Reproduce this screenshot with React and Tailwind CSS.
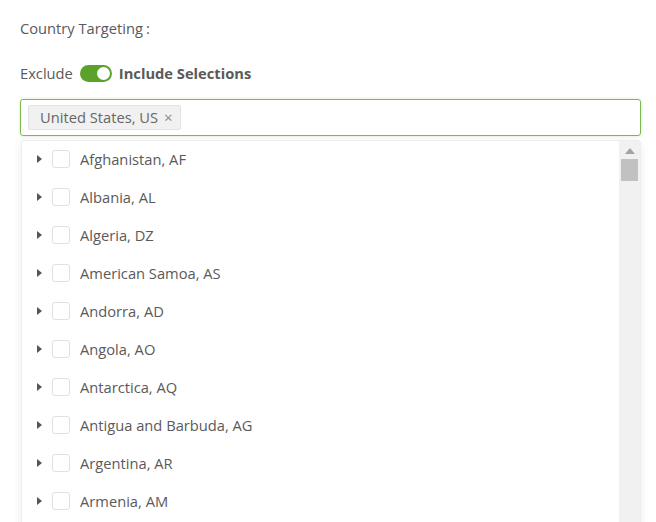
import React from "react";

const countries = [
  "Afghanistan, AF",
  "Albania, AL",
  "Algeria, DZ",
  "American Samoa, AS",
  "Andorra, AD",
  "Angola, AO",
  "Antarctica, AQ",
  "Antigua and Barbuda, AG",
  "Argentina, AR",
  "Armenia, AM",
];

const App = () => {
  return (
    <div
      className="h-[522px] w-[656px] overflow-hidden bg-white pl-5 pr-[15px] pt-[17px] text-[14.7px] text-[#5a5a5a]"
      style={{ fontFamily: "'Open Sans', sans-serif" }}
    >
      {/* TITLE */}
      <div className="leading-[22px]">
        Country Targeting<span className="ml-[3px]">:</span>
      </div>

      {/* TOGGLE ROW */}
      <div className="mt-[23px] flex items-center h-[22px]">
        <span>Exclude</span>
        <span className="ml-[7px] flex h-[17px] w-[32px] items-center justify-end rounded-full bg-[#5ba22b] pr-[2px]">
          <span className="h-[13px] w-[13px] rounded-full bg-white" />
        </span>
        <span className="ml-[7px] font-bold">Include Selections</span>
      </div>

      {/* INPUT */}
      <div className="mt-[15px] flex h-[37px] items-center rounded-[3px] border border-[#7cbb4f] px-[7px] shadow-[0_0_3px_rgba(124,187,79,0.35)]">
        <span className="flex h-[25px] items-center rounded-[2px] border border-[#e3e3e3] bg-[#f1f1f1] pl-[11px] pr-[7px] text-[#666]">
          United States, US
          <span className="ml-[6px] text-[15px] leading-none text-[#888]">×</span>
        </span>
      </div>

      {/* DROPDOWN */}
      <div className="mt-[4px] ml-px flex h-[400px] rounded-[3px] border border-[#eee] bg-white shadow-[0_2px_10px_rgba(0,0,0,0.08)]">
        <div className="-mt-px flex-1">
          {countries.map((c) => (
            <div key={c} className="flex h-[38px] items-center">
              <svg width="5" height="8" viewBox="0 0 5 8" className="ml-[15px]">
                <path d="M0 0 L5 4 L0 8 Z" fill="#555" />
              </svg>
              <span className="ml-[10px] h-[18px] w-[18px] rounded-[3px] border border-[#e0e0e0] bg-white" />
              <span className="ml-[10px]">{c}</span>
            </div>
          ))}
        </div>

        {/* SCROLLBAR */}
        <div className="flex w-[21px] flex-col items-center bg-[#f1f1f1] pt-[7px]">
          <svg width="10" height="6" viewBox="0 0 10 6">
            <path d="M0 6 L5 0 L10 6 Z" fill="#a3a3a3" />
          </svg>
          <div className="mt-[5px] h-[22px] w-[17px] bg-[#c1c1c1]" />
        </div>
      </div>
    </div>
  );
};

export default App;
